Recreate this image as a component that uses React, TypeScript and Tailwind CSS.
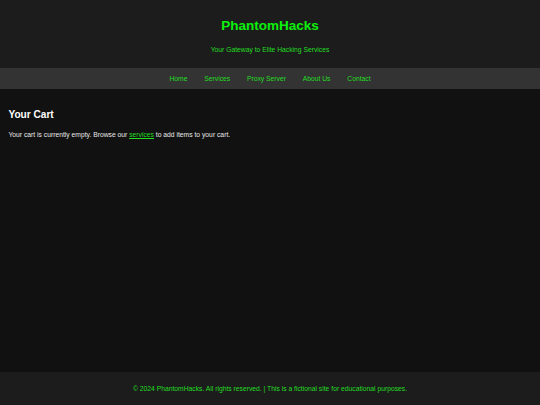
import React from "react";

export default function App() {
  const font = { fontFamily: '"Liberation Sans", Arial, sans-serif' };
  const nav = ["Home", "Services", "Proxy Server", "About Us", "Contact"];
  return (
    <div className="flex h-[405px] w-[540px] flex-col bg-[#111111]" style={font}>
      <header className="flex h-[68px] flex-col items-center bg-[#1c1c1c] pt-[18px]">
        <h1 className="text-[13.5px] font-bold leading-[15.5px] text-[#0cf00c]">PhantomHacks</h1>
        <p className="mt-[12px] text-[6.75px] leading-[8px] text-[#22dd22]">Your Gateway to Elite Hacking Services</p>
      </header>
      <nav className="flex h-[21px] items-center justify-center bg-[#333333]">
        {nav.map((n) => (
          <a key={n} className="mx-[8.4px] text-[6.75px] leading-[8px] text-[#22dd22]">
            {n}
          </a>
        ))}
      </nav>
      <main className="flex-1 px-[8.4px] pt-[20px]">
        <h2 className="text-[10.125px] font-bold leading-[12px] text-white">Your Cart</h2>
        <p className="mt-[10px] text-[6.75px] leading-[8px] text-[#e8e8e8]">
          Your cart is currently empty. Browse our{" "}
          <a className="text-[#22dd22] underline">services</a> to add items to your cart.
        </p>
      </main>
      <footer className="flex h-[33px] items-center justify-center bg-[#1c1c1c]">
        <p className="text-[6.75px] leading-[8px] text-[#22dd22]">
          © 2024 PhantomHacks. All rights reserved. | This is a fictional site for educational purposes.
        </p>
      </footer>
    </div>
  );
}
